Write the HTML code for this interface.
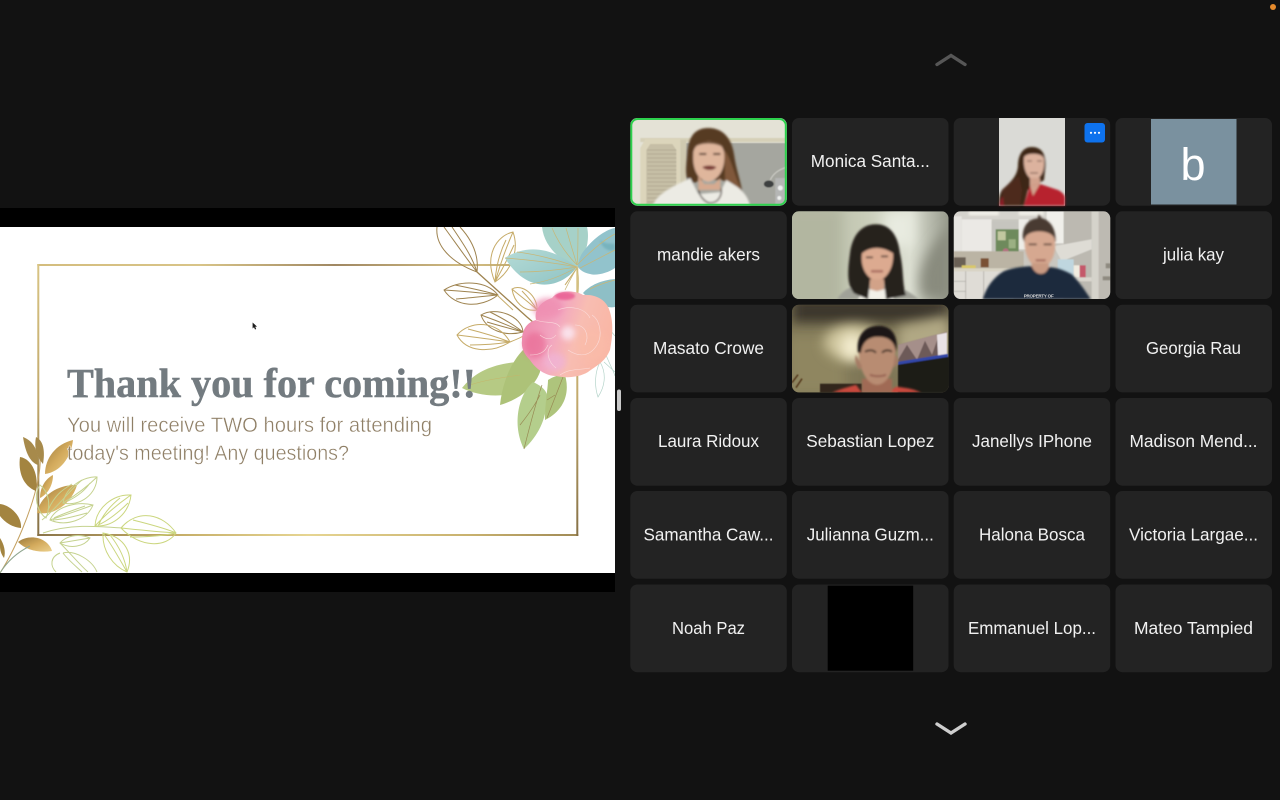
<!DOCTYPE html>
<html lang="en">
<head>
<meta charset="utf-8">
<title>Meeting</title>
<style>
html,body{margin:0;padding:0;background:#121212;width:1280px;height:800px;overflow:hidden}
svg{display:block;position:absolute;left:0;top:0}
.n{font-family:"Liberation Sans",sans-serif;font-size:17.5px;fill:#f1f1f1;text-anchor:middle}
.ol{fill:none;stroke-width:1}
</style>
</head>
<body>
<svg width="1280" height="800" viewBox="0 0 1280 800" xmlns="http://www.w3.org/2000/svg">
<defs>
<filter id="b03" x="-5%" y="-5%" width="110%" height="110%"><feGaussianBlur stdDeviation=".3"/></filter>
<filter id="b05" x="-10%" y="-10%" width="120%" height="120%"><feGaussianBlur stdDeviation=".5"/></filter>
<filter id="b1" x="-20%" y="-20%" width="140%" height="140%"><feGaussianBlur stdDeviation="1"/></filter>
<filter id="b3" x="-30%" y="-30%" width="160%" height="160%"><feGaussianBlur stdDeviation="3"/></filter>
<filter id="b6" x="-50%" y="-50%" width="200%" height="200%"><feGaussianBlur stdDeviation="6"/></filter>
<filter id="b12" x="-80%" y="-80%" width="260%" height="260%"><feGaussianBlur stdDeviation="12"/></filter>
<linearGradient id="fr" x1="0" y1="0" x2="1" y2="0"><stop offset="0" stop-color="#d4bd7e"/><stop offset=".3" stop-color="#d8c488"/><stop offset=".55" stop-color="#a08863"/><stop offset=".8" stop-color="#d2bd82"/><stop offset="1" stop-color="#a89058"/></linearGradient>
<linearGradient id="fr2" x1="0" y1="0" x2="1" y2="0"><stop offset="0" stop-color="#8a744a"/><stop offset=".25" stop-color="#c4ac66"/><stop offset=".5" stop-color="#e6d592"/><stop offset=".8" stop-color="#c8b16e"/><stop offset="1" stop-color="#a08a56"/></linearGradient>
<linearGradient id="frl" x1="0" y1="0" x2="0" y2="1"><stop offset="0" stop-color="#d8c484"/><stop offset=".5" stop-color="#c2a96c"/><stop offset="1" stop-color="#857046"/></linearGradient>
<linearGradient id="gold" x1="0" y1="0" x2="1" y2="1"><stop offset="0" stop-color="#9a7a3e"/><stop offset=".5" stop-color="#d3aa5c"/><stop offset="1" stop-color="#ecd08c"/></linearGradient>
<linearGradient id="teal" x1="0" y1="0" x2="1" y2="1"><stop offset="0" stop-color="#b5dbd6"/><stop offset="1" stop-color="#8fc3c4"/></linearGradient>
<linearGradient id="flw" x1="0" y1="0" x2="1" y2=".3"><stop offset="0" stop-color="#ec83a9"/><stop offset=".45" stop-color="#f2a6c0"/><stop offset=".7" stop-color="#f8bdb2"/><stop offset="1" stop-color="#f9b7a6"/></linearGradient>
<linearGradient id="wall2" x1="0" y1="0" x2="1" y2="0"><stop offset="0" stop-color="#b3b8a2"/><stop offset=".45" stop-color="#c8ccb8"/><stop offset=".75" stop-color="#dcdfd2"/><stop offset="1" stop-color="#96998b"/></linearGradient>
<clipPath id="c1"><rect x="0" y="0" width="156.5" height="87.7" rx="7"/></clipPath>
<clipPath id="slide"><rect x="0" y="227" width="615" height="346"/></clipPath>
</defs>

<rect width="1280" height="800" fill="#121212"/>
<circle cx="1273" cy="7" r="3" fill="#e58a2c"/>

<!-- slide -->
<rect x="0" y="208" width="615" height="384" fill="#000"/>
<rect x="0" y="227" width="615" height="346" fill="#fff"/>
<g clip-path="url(#slide)">
  <!-- frame -->
  <rect x="37.3" y="264" width="541" height="2" fill="url(#fr)"/>
  <rect x="37.3" y="534" width="541" height="2" fill="url(#fr2)"/>
  <rect x="37.3" y="264" width="2" height="272" fill="url(#frl)"/>
  <rect x="576.300" y="264" width="2" height="272" fill="url(#frl)"/>

  <!-- bottom-left gold leaves -->
  <g filter="url(#b03)">
    <path d="M0 573C15 550 32 510 38 480C42 460 40 445 38 440" fill="none" stroke="#c4a060" stroke-width="1"/>
    <path d="M23 437C34 441 39 452 38 465C29 462 25 450 23 437Z" fill="#a78a4c"/>
    <path d="M36 437C44 441 45 452 43 464C36 456 34 447 36 437Z" fill="#a78a4c"/>
    <path d="M73 440C56 444 45 458 45 474C60 472 71 458 73 440Z" fill="url(#gold)"/>
    <path d="M20 457C33 459 39 477 36 491C23 486 18 472 20 457Z" fill="#a3843f"/>
    <path d="M53 475C45 479 40 488 40 498C48 494 53 485 53 475Z" fill="url(#gold)"/>
    <path d="M77 485C58 484 40 496 37 513C56 516 72 502 77 485Z" fill="url(#gold)"/>
    <path d="M0 504C10 505 22 516 21 528C10 527 3 520 0 516Z" fill="#a3843f"/>
    <path d="M0 538C4 544 6 552 4 558C1 554 0 550 0 546Z" fill="#a3843f"/>
    <path d="M18 542C30 533 48 538 52 551C38 553 26 550 18 542Z" fill="url(#gold)"/>
    <path d="M0 573C8 560 18 552 30 546" fill="none" stroke="#8fa58e" stroke-width="1"/>
    <g class="ol" stroke="#c5d28f">
      <path d="M43 533C70 524 95 526 122 528M48 510C55 495 62 490 72 484M42 520C55 510 70 490 82 480M60 543C70 553 80 565 88 572"/>
      <path d="M97 477C85 476 66 486 63 503C80 507 97 494 97 477ZM97 477C88 486 76 495 63 503M90 483C84 492 74 498 68 501"/>
      <path d="M93 505C78 501 56 506 50 520C66 527 87 520 93 505ZM93 505C80 510 65 515 50 520M85 506C74 510 62 514 54 518M87 513C76 516 65 519 53 520"/>
      <path d="M40 485C33 495 37 512 46 518C51 505 49 492 40 485Z"/>
      <path d="M90 538C78 533 66 536 60 543C70 549 84 547 90 538ZM60 543L90 538"/>
      <path d="M60 553C50 557 50 566 56 572M63 553C75 550 92 560 97 572M63 553C68 560 78 568 82 572"/>
    </g>
    <g class="ol" stroke="#cbd67e">
      <path d="M131 495C113 494 96 508 95 526C114 527 129 513 131 495ZM131 495C118 504 105 515 95 526M120 498C110 506 103 515 99 524M128 503C120 511 108 521 98 525"/>
      <path d="M176 533C163 514 138 508 121 528C140 548 166 548 176 533ZM121 528C140 530 160 532 176 533M133 520C148 524 165 528 176 533M130 537C145 537 162 536 176 533"/>
      <path d="M127 572C134 555 126 537 103 533C102 551 113 566 127 572ZM103 533C112 545 120 560 127 572M110 535C118 545 125 558 127 572"/>
    </g>
  </g>

  <!-- top right outline leaves -->
  <g filter="url(#b03)">
    <g class="ol" stroke="#9e8350">
      <path d="M477 272L527 317L540 328" stroke-width="1.300"/>
      <path d="M437 227C435 245 450 262 477 272C479 255 472 240 460 227M444 227C455 242 466 258 477 272M452 227C462 242 472 256 477 272"/>
      <path d="M444 290C460 280 486 280 498 295C480 309 455 307 444 290ZM444 290C462 291 482 293 498 295M455 285C470 288 485 291 498 295M456 299C470 298 485 296 498 295"/>
      <path d="M481 315C496 306 522 316 523 332C505 337 486 330 481 315ZM481 315C495 320 510 326 523 332M490 312C502 318 514 325 523 332M487 322C500 326 512 329 523 332"/>
    </g>
    <g class="ol" stroke="#c6ab68">
      <path d="M513 232C496 236 484 256 495 282C510 272 520 252 513 232ZM513 232C506 248 500 265 495 282M506 240C500 252 496 266 495 282M514 245C508 258 502 270 495 282"/>
      <path d="M512 289C522 283 538 296 537 310C524 312 514 302 512 289ZM512 289C520 296 530 303 537 310M522 291C528 297 533 303 537 310"/>
      <path d="M457 335C470 320 498 320 510 342C490 354 466 352 457 335ZM457 335C475 337 495 340 510 342M468 329C480 332 497 337 510 342M470 345C482 345 497 344 510 342"/>
      <path d="M497 295L513 310M510 342C520 338 525 336 530 330M540 268L548 282M565 285C570 278 574 272 577 268"/>
    </g>
  </g>

  <!-- teal leaves -->
  <g filter="url(#b03)">
    <path d="M542 227C544 245 558 260 577 267C586 255 590 240 587 227Z" fill="#a6d1c8"/>
    <path d="M583 252C595 236 608 229 615 228V268C608 273 596 276 590 274C584 273 580 270 578 267C578 262 580 256 583 252Z" fill="#92c3cc"/>
    <path d="M600 240C606 245 612 243 615 244V250C608 252 602 248 600 240Z" fill="#77b3bd" filter="url(#b1)"/>
    <path d="M505 258C520 248 545 242 577 267C562 288 528 296 505 258Z" fill="url(#teal)"/>
    <path d="M615 279C602 280 590 285 583 293C592 302 606 309 615 307Z" fill="#8ebfc6"/>
    <g class="ol" stroke="#c8b676" style="stroke-width:.7">
      <path d="M505 258C530 260 555 263 577 267M517 252C535 254 558 260 577 267M520 272C538 272 558 270 577 267M530 284C545 282 562 276 577 267M552 228C558 242 566 254 577 265M566 228C570 242 574 255 577 265M578 228C578 242 578 255 577 265M577 265C590 252 603 240 615 234M580 268C592 262 605 255 615 250M577 268C580 280 578 295 577 300M565 290C570 280 573 274 577 268M590 289C598 285 607 282 615 280"/>
    </g>
    <path d="M598 397C594 385 595 372 600 362C606 372 606 385 598 397ZM606 355C610 365 614 372 615 376M610 330L615 336M604 362L615 372" fill="none" stroke="#b5d4ca" stroke-width=".7"/>
  </g>

  <!-- green leaves -->
  <g filter="url(#b03)">
    <path d="M462 388C475 372 492 364 518 362L530 375L518 392C500 398 478 396 462 388Z" fill="#b6ca84"/>
    <path d="M500 405C502 385 510 362 525 348C534 352 542 362 540 372C534 388 518 400 500 405Z" fill="#adc278"/>
    <path d="M524 449C512 425 518 395 533 382C542 386 549 392 547 400C546 420 538 436 524 449Z" fill="#b4ce8c"/>
    <path d="M545 420C545 402 548 388 548 380C554 376 562 374 565 375C570 392 565 410 545 420Z" fill="#aec47c"/>
    <path d="M524 449C530 425 536 402 542 385M520 425C528 415 535 405 540 395M547 400L555 395M547 418C552 405 558 390 563 377" fill="none" stroke="#988a53" stroke-width=".7"/>
    <path d="M470 385C485 380 500 378 520 375" fill="none" stroke="#c5b56a" stroke-width=".5"/>
  </g>

  <!-- flower -->
  <g>
    <path d="M522 340C522 330 527 322 536 320C534 310 540 302 552 298C558 290 575 290 583 295C596 294 607 300 610 312C614 325 612 340 610 350C605 362 596 366 588 372C578 378 565 378 556 376C545 376 535 368 530 360C524 354 521 348 522 340Z" fill="url(#flw)" filter="url(#b03)"/>
    <ellipse cx="548" cy="308" rx="15" ry="10" fill="#ef8fb2" opacity=".8" filter="url(#b3)"/>
    <ellipse cx="535" cy="345" rx="11" ry="13" fill="#e8648f" opacity=".6" filter="url(#b3)"/>
    <ellipse cx="565" cy="296" rx="10" ry="4" fill="#e84f8a" opacity=".7" filter="url(#b1)"/>
    <ellipse cx="568" cy="333" rx="7" ry="7" fill="#fbeaf4" opacity=".85" filter="url(#b3)"/>
    <ellipse cx="555" cy="362" rx="11" ry="9" fill="#f0b4d8" opacity=".75" filter="url(#b3)"/>
    <ellipse cx="592" cy="345" rx="14" ry="16" fill="#fabca9" opacity=".7" filter="url(#b3)"/>
    <g fill="none" stroke="#fbe2e2" stroke-width=".6" opacity=".85">
      <path d="M536 320C545 324 555 320 560 327M552 345C545 350 548 362 556 368M568 350C580 358 590 356 597 345C603 335 600 320 592 315M558 310C570 305 585 308 590 318M540 335C546 340 552 340 556 335M575 325C585 325 590 335 585 345M560 375C570 368 582 370 590 368M530 355C540 355 545 352 548 345"/>
    </g>
  </g>

  <!-- slide text -->
  <text x="67" y="397" font-family="'Liberation Serif',serif" font-weight="700" font-size="41" fill="#737b80" stroke="#737b80" stroke-width=".5" textLength="409" lengthAdjust="spacingAndGlyphs">Thank you for coming!!</text>
  <g font-family="'Liberation Sans',sans-serif" font-size="21" fill="#8f7f66" stroke="#ffffff" stroke-width=".42">
    <text x="67" y="432" textLength="365" lengthAdjust="spacingAndGlyphs">You will receive TWO hours for attending</text>
    <text x="67" y="460" textLength="282" lengthAdjust="spacingAndGlyphs">today's meeting! Any questions?</text>
  </g>
  <!-- cursor -->
  <path d="M252.600 322.500L252.600 328.500L254 327.300L255 329.500L256.200 329L255.200 326.800L257 326.600Z" fill="#1d1d1d"/>
</g>

<!-- divider handle -->
<rect x="617" y="389.500" width="4" height="21.500" rx="2" fill="#c9c9c9"/>

<!-- chevrons -->
<path d="M937 64.500L951 55.500L965 64.500" fill="none" stroke="#565656" stroke-width="3.400" stroke-linecap="round"/>
<path d="M937 724L951 733L965 724" fill="none" stroke="#cecece" stroke-width="3.400" stroke-linecap="round"/>

<!-- tiles -->
<g fill="#232323">
  <rect x="792" y="118" width="156.500" height="87.700" rx="7"/>
  <rect x="953.700" y="118" width="156.500" height="87.700" rx="7"/>
  <rect x="1115.500" y="118" width="156.500" height="87.700" rx="7"/>
  <rect x="630.300" y="211.300" width="156.500" height="87.700" rx="7"/>
  <rect x="1115.500" y="211.300" width="156.500" height="87.700" rx="7"/>
  <rect x="630.300" y="304.700" width="156.500" height="87.700" rx="7"/>
  <rect x="953.700" y="304.700" width="156.500" height="87.700" rx="7"/>
  <rect x="1115.500" y="304.700" width="156.500" height="87.700" rx="7"/>
  <rect x="630.300" y="398" width="156.500" height="87.700" rx="7"/>
  <rect x="792" y="398" width="156.500" height="87.700" rx="7"/>
  <rect x="953.700" y="398" width="156.500" height="87.700" rx="7"/>
  <rect x="1115.500" y="398" width="156.500" height="87.700" rx="7"/>
  <rect x="630.300" y="491" width="156.500" height="87.700" rx="7"/>
  <rect x="792" y="491" width="156.500" height="87.700" rx="7"/>
  <rect x="953.700" y="491" width="156.500" height="87.700" rx="7"/>
  <rect x="1115.500" y="491" width="156.500" height="87.700" rx="7"/>
  <rect x="630.300" y="584.500" width="156.500" height="87.700" rx="7"/>
  <rect x="792" y="584.500" width="156.500" height="87.700" rx="7"/>
  <rect x="953.700" y="584.500" width="156.500" height="87.700" rx="7"/>
  <rect x="1115.500" y="584.500" width="156.500" height="87.700" rx="7"/>
</g>

<!-- video: active speaker -->
<g transform="translate(630.300,118)">
  <g clip-path="url(#c1)">
    <rect width="157" height="88" fill="#e4e2d6"/>
    <g filter="url(#b05)">
      <rect x="10" y="20" width="147" height="4" fill="#d6d0b8"/>
      <path d="M10 88V30L15 21H50V88Z" fill="#dcd5bb"/>
      <path d="M16 88V32L20 26H42L46 32V88Z" fill="#c6bea6"/>
      <g stroke="#9b9580" stroke-width=".7" opacity=".6">
        <path d="M17 32H46M17 36H46M17 40H46M17 44H46M17 48H46M17 52H46M17 56H46M17 60H46M17 64H46M17 68H46M17 72H46M17 76H46M17 80H46M17 84H46"/>
      </g>
      <rect x="50" y="22" width="6" height="66" fill="#cfc9b0"/>
      <rect x="56" y="25" width="101" height="63" fill="#a5a69f"/>
      <path d="M140 62C143 55 150 51 157 49" fill="none" stroke="#cfcfc8" stroke-width="1"/>
      <ellipse cx="138.500" cy="66" rx="5" ry="3.500" fill="#3c3f40"/>
      <rect x="145" y="60" width="12" height="28" fill="#b5b6b5"/>
      <circle cx="150" cy="70" r="2.500" fill="#eef0ef"/><circle cx="149" cy="80" r="2" fill="#eef0ef"/>
    </g>
    <g filter="url(#b1)">
      <path d="M78 10C62 10 58 22 57 36C56 50 54 58 60 66L72 62L92 62L112 74C110 62 106 52 104 38C102 22 94 10 78 10Z" fill="#563a22"/>
      <path d="M94 32C102 42 104 58 112 74L95 72Z" fill="#80593a"/>
      <path d="M63 36C63 20 93 18 94 36C95 52 88 62 78 64C68 62 62 52 63 36Z" fill="#dfb69c"/>
      <path d="M63 30C66 22 90 20 94 30C86 24 70 24 63 30Z" fill="#6b4d34"/>
      <path d="M69 36H76M83 36H90" stroke="#43291e" stroke-width="1.800"/>
      <path d="M72 49C76 47 82 47 86 49C84 53 75 53 72 49Z" fill="#7b3e38"/>
      <path d="M68 58V72H90V60L84 66H74Z" fill="#d6aa90"/>
      <path d="M22 88C28 74 44 68 60 60L68 76L90 74L96 62C105 68 116 72 120 88Z" fill="#ecebe4"/>
      <path d="M68 72C70 80 76 85 80 85C86 85 92 80 91 70" fill="none" stroke="#3a2a26" stroke-width="1.300"/>
    </g>
  </g>
  <rect x="1" y="1" width="154.500" height="85.700" rx="6.500" fill="none" stroke="#2dd14d" stroke-width="2"/>
</g>

<!-- video: person 2 -->
<g transform="translate(792,211.300)">
  <g clip-path="url(#c1)">
    <rect width="157" height="88" fill="url(#wall2)"/>
    <rect x="-5" y="-5" width="55" height="100" fill="#b2b6a0" filter="url(#b6)"/>
    <rect x="92" y="0" width="30" height="35" fill="#e8ebe0" filter="url(#b6)"/>
    <path d="M132 88C122 70 130 40 160 15V88Z" fill="#898b7e" filter="url(#b6)"/>
    <g filter="url(#b1)">
      <path d="M45 88C50 80 56 76 66 74H104C112 78 120 82 127 88Z" fill="#a0a198"/>
      <path d="M66 88L72 78H98L102 88Z" fill="#f2f0e8"/>
      <path d="M84 13C68 13 60 26 58 42C56 58 54 72 62 82L76 88L78 70H92L94 88L114 84C110 72 112 60 108 42C106 24 98 13 84 13Z" fill="#28201d"/>
      <path d="M70 42C70 26 99 26 101 42C102 56 95 68 85 70C75 68 68 56 70 42Z" fill="#dcaa90"/>
      <path d="M70 36C72 28 88 26 92 26C98 30 101 36 101 42C92 36 80 34 70 42Z" fill="#28201d"/>
      <path d="M74 46H81M89 45H96" stroke="#3f2b26" stroke-width="1.600"/>
      <path d="M79 60H91" stroke="#a86a5e" stroke-width="2.400"/>
      <path d="M78 68H92V78L85 80L78 78Z" fill="#d2a288"/>
    </g>
  </g>
</g>

<!-- video: portrait person -->
<g>
  <rect x="999" y="118" width="66" height="87.700" fill="#dadad6"/>
  <g filter="url(#b1)">
    <path d="M1032 147C1022 147 1018 156 1018 166C1017 178 1008 184 1002 190C999 195 999 200 999 205.700H1024L1028 190L1044 180L1045 170C1047 155 1042 147 1032 147Z" fill="#3e2519"/>
    <path d="M1024 158C1024 152 1045 152 1044 160C1045 172 1040 179 1034 180C1028 179 1023 170 1024 158Z" fill="#dcb29e"/>
    <path d="M1027 161H1032M1037 161H1042M1030 173H1038" stroke="#5d3a30" stroke-width="1"/>
    <path d="M1030 178H1040V186H1030Z" fill="#d2a28d"/>
    <path d="M1024 205.700L1030 186L1040 184L1058 190C1062 192 1065 195 1065 198V205.700Z" fill="#b7222e"/>
    <path d="M1030 186L1033 196L1040 184Z" fill="#d2a28d"/>
    <path d="M999 205.700C1001 197 1005 192 1009 190L1008 205.700Z" fill="#8a1f25"/>
    <path d="M1002 190C1008 184 1015 180 1019 176L1022 190L1020 205.700H1004Z" fill="#4d2c1b"/>
  </g>
  <rect x="1084.500" y="123" width="20.500" height="19.500" rx="3" fill="#0e72ed"/>
  <circle cx="1091" cy="132.800" r="1.100" fill="#fff"/><circle cx="1095" cy="132.800" r="1.100" fill="#fff"/><circle cx="1099" cy="132.800" r="1.100" fill="#fff"/>
</g>

<!-- avatar b -->
<rect x="1151" y="119" width="85.500" height="85.500" fill="#7a919f"/>
<text x="1193" y="180" font-family="'Liberation Sans',sans-serif" font-size="45" fill="#fff" text-anchor="middle">b</text>

<!-- video: kitchen -->
<g transform="translate(953.700,211.300)">
  <g clip-path="url(#c1)">
    <rect width="157" height="88" fill="#c9c7c0"/>
    <g filter="url(#b05)">
      <rect x="0" y="0" width="157" height="8" fill="#d5d3cd"/>
      <rect x="15" y="0" width="30" height="4" fill="#f2f0e8" filter="url(#b1)"/>
      <rect x="65" y="0" width="25" height="4" fill="#f2f0e8" filter="url(#b1)"/>
      <rect x="0" y="5" width="8" height="35" fill="#e6e5e1"/>
      <rect x="8" y="8" width="30" height="32" fill="#ebe9e5"/>
      <rect x="38" y="10" width="28" height="32" fill="#c6c5bf"/>
      <rect x="65" y="8" width="10" height="30" fill="#eeede8"/>
      <rect x="93" y="0" width="17" height="32" fill="#f0efea"/>
      <rect x="110" y="0" width="28" height="88" fill="#bcb9b1"/>
      <path d="M100 35L138 28V38L108 50Z" fill="#dedcd5"/>
      <rect x="42" y="18" width="23" height="23" fill="#6e8a5c"/>
      <rect x="44" y="20" width="8" height="9" fill="#c2c8a0"/><rect x="55" y="28" width="7" height="9" fill="#9bb083"/>
      <circle cx="52" cy="40" r="3" fill="#b26f7f"/>
      <rect x="0" y="40" width="70" height="17" fill="#bbb4a4"/>
      <rect x="0" y="46" width="12" height="10" fill="#6b6155"/>
      <rect x="27" y="47" width="8" height="9" fill="#7a5134"/>
      <rect x="8" y="54" width="14" height="3" fill="#d9c868"/>
      <rect x="0" y="57" width="62" height="3" fill="#d9d4c4"/>
      <rect x="0" y="60" width="60" height="28" fill="#dfdcd6"/>
      <path d="M12 60V88M30 60V88M0 70H12M0 80H12" stroke="#a9a69f" stroke-width=".7"/>
      <rect x="104" y="48" width="16" height="18" fill="#bfd6df"/>
      <rect x="120" y="54" width="6" height="12" fill="#f0ece0"/>
      <rect x="126" y="54" width="6" height="14" fill="#c4596a"/>
      <rect x="118" y="66" width="20" height="4" fill="#d9d6ce"/>
      <rect x="138" y="0" width="7" height="88" fill="#d5d3cb"/>
      <rect x="145" y="0" width="12" height="88" fill="#bdbab2"/>
      <rect x="152" y="52" width="5" height="5" fill="#8e8a80"/><rect x="149" y="65" width="8" height="4" fill="#8e8a80"/>
    </g>
    <g filter="url(#b1)">
      <path d="M69 26C69 12 77 8 84 7L85 3L88 7C96 9 102 16 102 30L99 34L72 34Z" fill="#4a3a33"/>
      <path d="M71 28C72 18 98 17 101 28C103 42 98 55 86 57C76 55 70 42 71 28Z" fill="#d6a890"/>
      <path d="M75 33H83M90 33H98" stroke="#4a3229" stroke-width="1.700"/>
      <path d="M82 49H92" stroke="#9b5f54" stroke-width="1.800"/>
      <path d="M78 52H95V62L87 66L78 62Z" fill="#c99a82"/>
      <path d="M29 88C33 75 40 66 50 60C60 56 72 55 78 55C82 65 92 65 95 56C104 56 112 60 118 63C125 70 132 80 137 88Z" fill="#1f2b3c"/>
    </g>
    <text x="70" y="86" font-family="'Liberation Sans',sans-serif" font-size="4.500" font-weight="700" fill="#d8d8d8" textLength="30">PROPERTY OF</text>
  </g>
</g>

<!-- video: man -->
<g transform="translate(792,304.700)">
  <g clip-path="url(#c1)">
    <rect width="157" height="88" fill="#7f7757"/>
    <rect x="0" y="-6" width="157" height="24" fill="#3a3529" filter="url(#b6)"/>
    <rect x="-6" y="30" width="60" height="60" fill="#8f8660" filter="url(#b6)"/>
    <ellipse cx="62" cy="38" rx="30" ry="18" fill="#cfc69e" filter="url(#b6)"/>
    <ellipse cx="60" cy="42" rx="11" ry="13" fill="#f4edd0" filter="url(#b6)"/>
    <path d="M106 22L157 10V50L106 60Z" fill="#b1a884" filter="url(#b6)"/>
    <g filter="url(#b05)">
      <path d="M106 40L155 27V54L106 60Z" fill="#6d5a58"/>
      <path d="M115 40L125 55L133 36L140 50L147 30L150 50H155V27L106 40V55Z" fill="#b39c97" opacity=".8"/>
      <path d="M145 30L155 28V50L146 52Z" fill="#e9e2e5"/>
      <path d="M106 57L156 49V53L106 60Z" fill="#3346a8"/>
      <path d="M106 60L157 52V88H106Z" fill="#1e1b19"/>
      <rect x="28" y="79" width="42" height="9" fill="#33251e"/>
      <path d="M0 78L6 70M4 83L10 74" stroke="#54391f" stroke-width="1.500"/>
    </g>
    <g filter="url(#b1)">
      <path d="M40 88C48 84 58 82 64 80L70 88H96L104 82C116 83 124 85 129 88Z" fill="#c9493d"/>
      <path d="M70 74H100V88H70Z" fill="#a06a55"/>
      <path d="M67 50C64 35 70 22 86 22C100 22 106 36 103 50C102 65 96 80 85 80C74 80 67 62 67 50Z" fill="#b88c72"/>
      <path d="M66 48C64 34 70 21 87 21C101 21 107 34 104 48C103 38 98 32 86 32C76 32 70 38 69 48Z" fill="#1e1814"/>
      <path d="M73 47C77 45 81 45 84 48M90 48C93 45 97 45 100 47" fill="none" stroke="#2d211b" stroke-width="1.800"/>
      <path d="M78 70C82 72 90 72 94 70" stroke="#8b4f44" stroke-width="1.500" fill="none"/>
      <path d="M64 50L70 62L67 65C64 60 62 55 64 50ZM103 50L101 63L105 60C107 56 106 52 103 50Z" fill="#a57b65"/>
    </g>
  </g>
</g>

<!-- black video -->
<rect x="827.700" y="585.700" width="85.500" height="85" fill="#000"/>

<!-- names -->
<text class="n" x="870.300" y="167" textLength="119" lengthAdjust="spacingAndGlyphs">Monica Santa...</text>
<text class="n" x="708.500" y="260.500" textLength="103" lengthAdjust="spacingAndGlyphs">mandie akers</text>
<text class="n" x="1193.500" y="260.500" textLength="61" lengthAdjust="spacingAndGlyphs">julia kay</text>
<text class="n" x="708.500" y="354" textLength="111" lengthAdjust="spacingAndGlyphs">Masato Crowe</text>
<text class="n" x="1193.500" y="354" textLength="95" lengthAdjust="spacingAndGlyphs">Georgia Rau</text>
<text class="n" x="708.500" y="447" textLength="101" lengthAdjust="spacingAndGlyphs">Laura Ridoux</text>
<text class="n" x="870.300" y="447" textLength="128" lengthAdjust="spacingAndGlyphs">Sebastian Lopez</text>
<text class="n" x="1032" y="447" textLength="120" lengthAdjust="spacingAndGlyphs">Janellys IPhone</text>
<text class="n" x="1193.500" y="447" textLength="128" lengthAdjust="spacingAndGlyphs">Madison Mend...</text>
<text class="n" x="708.500" y="540.500" textLength="130" lengthAdjust="spacingAndGlyphs">Samantha Caw...</text>
<text class="n" x="870.300" y="540.500" textLength="127" lengthAdjust="spacingAndGlyphs">Julianna Guzm...</text>
<text class="n" x="1032" y="540.500" textLength="106" lengthAdjust="spacingAndGlyphs">Halona Bosca</text>
<text class="n" x="1193.500" y="540.500" textLength="129" lengthAdjust="spacingAndGlyphs">Victoria Largae...</text>
<text class="n" x="708.500" y="634" textLength="73" lengthAdjust="spacingAndGlyphs">Noah Paz</text>
<text class="n" x="1032" y="634" textLength="128" lengthAdjust="spacingAndGlyphs">Emmanuel Lop...</text>
<text class="n" x="1193.500" y="634" textLength="119" lengthAdjust="spacingAndGlyphs">Mateo Tampied</text>
</svg>
</body>
</html>
